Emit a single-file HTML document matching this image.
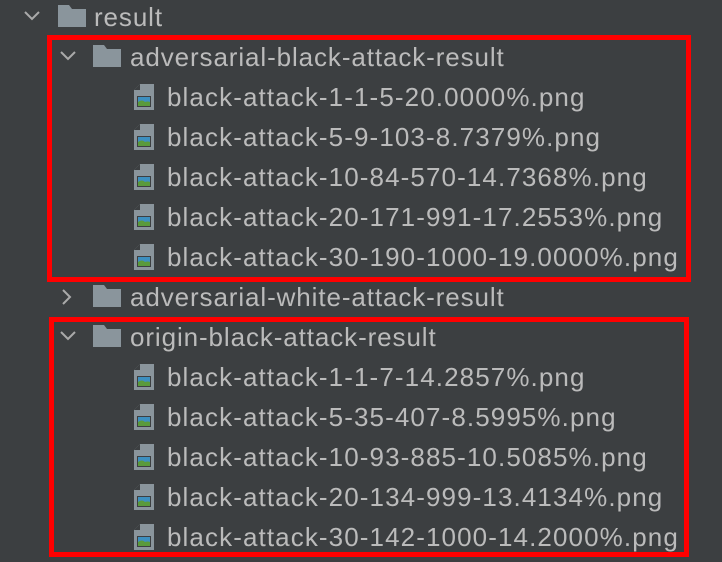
<!DOCTYPE html>
<html><head><style>
body{margin:0;width:722px;height:562px;background:#3c3f41;overflow:hidden;font-family:"Liberation Sans",Arial,sans-serif;color:#bbbbbb;position:relative}
.r{position:absolute;height:40px;line-height:40px;font-size:26px;letter-spacing:1.1px;white-space:nowrap}
.d{letter-spacing:0.9px}
.box{position:absolute;border:5px solid #ff0000;box-sizing:border-box}
svg{position:absolute}
</style></head><body>
<div class="box" style="left:47px;top:35px;width:644px;height:247px"></div>
<div class="box" style="left:49px;top:317px;width:640px;height:240px"></div>

<svg width="20" height="14" style="left:22px;top:9px"><path d="M3 3 L10 10 L17 3" stroke="#aaa" stroke-width="2" fill="none"/></svg>
<svg width="28" height="22" style="left:58px;top:5px"><path d="M0 0 H11 L14 4 H28 V22 H0Z" fill="#8a959c"/></svg>
<div class="r d" style="left:94px;top:-3px">result</div>

<svg width="20" height="14" style="left:58px;top:49px"><path d="M3 3 L10 10 L17 3" stroke="#aaa" stroke-width="2" fill="none"/></svg>
<svg width="28" height="22" style="left:93px;top:45px"><path d="M0 0 H11 L14 4 H28 V22 H0Z" fill="#8a959c"/></svg>
<div class="r d" style="left:130px;top:37px">adversarial-black-attack-result</div>

<svg width="14" height="20" style="left:60px;top:287px"><path d="M3 3 L10 10 L3 17" stroke="#aaa" stroke-width="2" fill="none"/></svg>
<svg width="28" height="22" style="left:93px;top:285px"><path d="M0 0 H11 L14 4 H28 V22 H0Z" fill="#8a959c"/></svg>
<div class="r d" style="left:130px;top:277px">adversarial-white-attack-result</div>

<svg width="20" height="14" style="left:58px;top:329px"><path d="M3 3 L10 10 L17 3" stroke="#aaa" stroke-width="2" fill="none"/></svg>
<svg width="28" height="22" style="left:93px;top:325px"><path d="M0 0 H11 L14 4 H28 V22 H0Z" fill="#8a959c"/></svg>
<div class="r d" style="left:130px;top:317px">origin-black-attack-result</div>

<svg width="0" height="0"><defs><g id="f"><path d="M6 0 H20 V26 H0 V6Z" fill="#8a959c"/><path d="M0 6 L6 0 V6Z" fill="#3c3f41"/><rect x="3" y="12" width="14" height="11" fill="#3c3f41"/><rect x="4" y="13" width="12" height="9" fill="#3d8fbf"/><path d="M4 22 V18 Q8 15 11 18 Q14 17 16 18 V22Z" fill="#5a9a3c"/></g></defs></svg>
<svg width="20" height="26" style="left:134px;top:84px"><use href="#f"/></svg>
<svg width="20" height="26" style="left:134px;top:124px"><use href="#f"/></svg>
<svg width="20" height="26" style="left:134px;top:164px"><use href="#f"/></svg>
<svg width="20" height="26" style="left:134px;top:204px"><use href="#f"/></svg>
<svg width="20" height="26" style="left:134px;top:244px"><use href="#f"/></svg>
<svg width="20" height="26" style="left:134px;top:364px"><use href="#f"/></svg>
<svg width="20" height="26" style="left:134px;top:404px"><use href="#f"/></svg>
<svg width="20" height="26" style="left:134px;top:444px"><use href="#f"/></svg>
<svg width="20" height="26" style="left:134px;top:484px"><use href="#f"/></svg>
<svg width="20" height="26" style="left:134px;top:524px"><use href="#f"/></svg>

<div class="r" style="left:167px;top:77px">black-attack-1-1-5-20.0000%.png</div>
<div class="r" style="left:167px;top:117px">black-attack-5-9-103-8.7379%.png</div>
<div class="r" style="left:167px;top:157px">black-attack-10-84-570-14.7368%.png</div>
<div class="r" style="left:167px;top:197px">black-attack-20-171-991-17.2553%.png</div>
<div class="r" style="left:167px;top:237px">black-attack-30-190-1000-19.0000%.png</div>
<div class="r" style="left:167px;top:357px">black-attack-1-1-7-14.2857%.png</div>
<div class="r" style="left:167px;top:397px">black-attack-5-35-407-8.5995%.png</div>
<div class="r" style="left:167px;top:437px">black-attack-10-93-885-10.5085%.png</div>
<div class="r" style="left:167px;top:477px">black-attack-20-134-999-13.4134%.png</div>
<div class="r" style="left:167px;top:517px">black-attack-30-142-1000-14.2000%.png</div>
</body></html>
